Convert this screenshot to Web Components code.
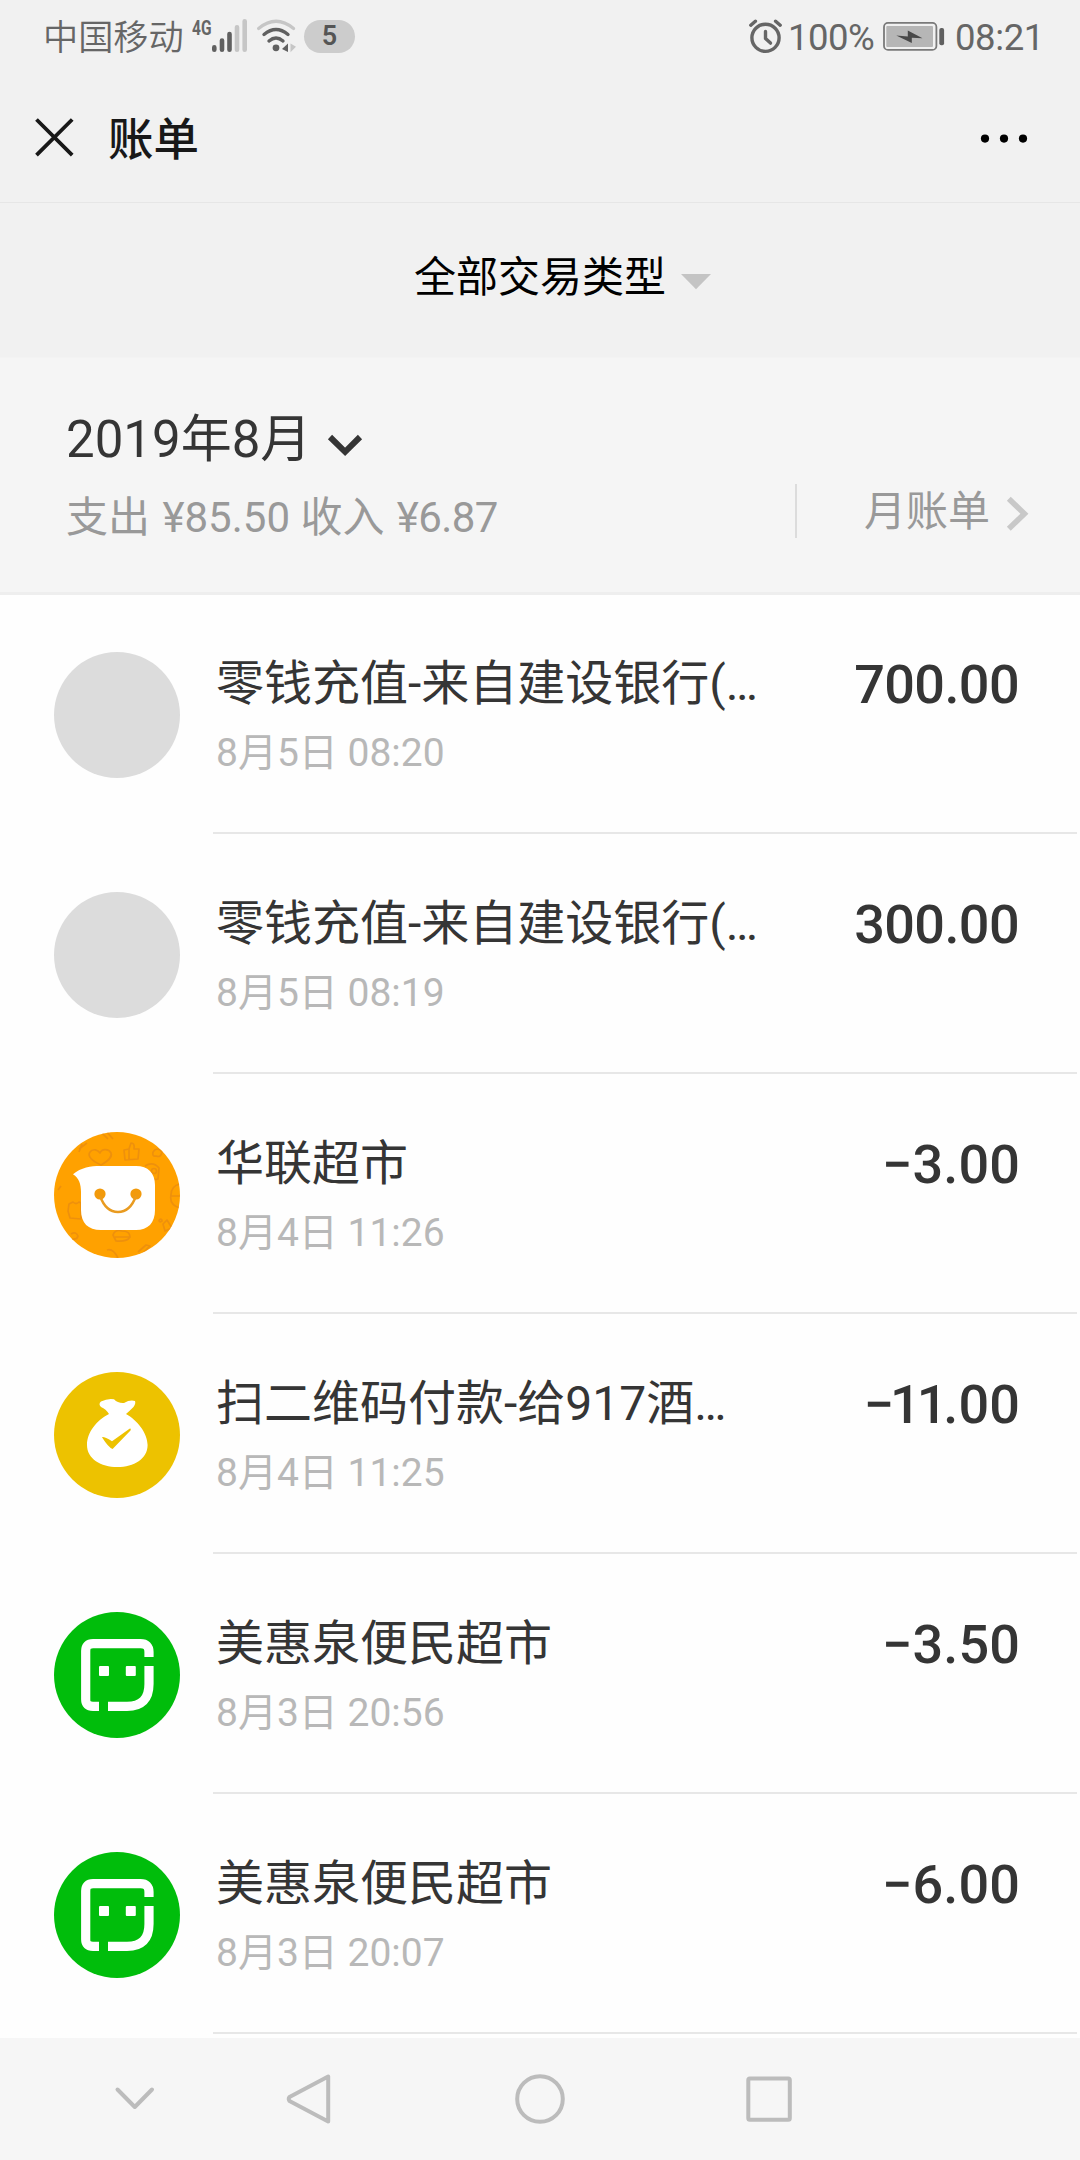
<!DOCTYPE html>
<html lang="zh-CN">
<head>
<meta charset="utf-8">
<title>账单</title>
<style>
html,body{margin:0;padding:0;background:#fefefe}
body{width:1080px;height:2160px;overflow:hidden;font-family:Roboto,"Noto Sans CJK SC",sans-serif}
</style>
</head>
<body>
<bill-app></bill-app>
<script>
const define = (name, html) => customElements.define(name, class extends HTMLElement {
  constructor() {
    super();
    this.attachShadow({ mode: 'open' }).innerHTML =
      '<style>*{box-sizing:border-box}svg{display:block;flex:none}span{white-space:nowrap}</style>' + html;
  }
});

define('status-bar', `
<style>
:host{display:flex;height:75px;color:#666;align-items:flex-start}
.carrier{font-size:35.2px;line-height:40px;margin:18px 0 0 43px;width:147px;font-weight:350}
.net{font-size:21px;line-height:20px;font-weight:700;width:20px;margin:18px 0 0 2px;transform:scaleX(.74);transform-origin:0 0}
.badge{width:51px;height:33px;border-radius:17px;background:#ccc;margin:20px 0 0 7px;text-align:center;font-size:27px;line-height:33px;font-weight:600;color:#555}
.pct,.time{font-size:36.5px;line-height:40px;margin-top:18px}
.pct{margin-left:6px;width:95px;letter-spacing:-.5px}
.time{margin-left:10px;letter-spacing:-.4px}
.gap{flex:none;width:393px}
</style>
<span class="carrier">中国移动</span><span class="net">4G</span>
<svg width="85" height="60" viewBox="210 0 85 60" fill="none" stroke-linecap="round">
  <g stroke="#606060" stroke-width="4.6"><path d="M212.3 47.4v2.4M220 40.6v9.2M227.5 34v15.8"/></g>
  <g stroke="#c6c6c6" stroke-width="4.6"><path d="M235 27.2v22.6M242.7 21.2v28.6"/></g>
  <path d="M256.6 28.5Q274 14 291.6 28.5" stroke="#c6c6c6" stroke-width="3.2"/>
  <path d="M262 34.5Q274 24.5 286 34.5M267 41Q274 35 281 41" stroke="#606060" stroke-width="3.4"/>
  <circle cx="274" cy="47.8" r="3.4" fill="#606060"/>
  <path d="M280 49l6-5.5V52z" fill="#606060"/><path d="M288.5 43.5l5.5 3.2-5.5 5.5z" fill="#c6c6c6"/>
</svg>
<span class="badge">5</span><span class="gap"></span>
<svg width="34" height="60" viewBox="748 0 34 60" fill="none" stroke="#666" stroke-width="3.4" stroke-linecap="round">
  <circle cx="765.5" cy="37.8" r="13.6"/><path d="M750.8 25.2l4.6-4M775.6 21.2l4.6 4"/><path d="M765.5 31.5v7l5 4.6" stroke-linejoin="round"/>
</svg>
<span class="pct">100%</span>
<svg width="62" height="60" viewBox="884 0 62 60">
  <rect x="885" y="22.9" width="52.4" height="27" rx="4" fill="none" stroke="#7a7a7a" stroke-width="1.8"/>
  <rect x="887.3" y="26" width="46.7" height="21" rx="1" fill="#b6b6b6"/>
  <path d="M897.3 35.4L908.8 36.5V30.4L923.5 38.3L912.8 37.8V43Z" fill="#484848"/>
  <rect x="940.3" y="28" width="4.8" height="17.3" rx="2" fill="#606060"/>
</svg>
<span class="time">08:21</span>`);

define('nav-header', `
<style>
:host{display:flex;height:129px;border-bottom:1px solid #e6e6e6;padding:0 52px 0 34px}
span{font-size:45.5px;line-height:60px;font-weight:500;color:#181818;margin:36px 0 0 33px;flex:1}
svg{margin-top:42px}
</style>
<svg width="41" height="41" viewBox="34 117 41 41" stroke="#181818" stroke-width="3.8"><path d="M36.5 119.5L72.2 155.2M72.2 119.5L36.5 155.2"/></svg>
<span><slot></slot></span>
<svg width="50" height="41" viewBox="978 117 50 41"><circle cx="985" cy="138.6" r="4.1"/><circle cx="1004" cy="138.6" r="4.1"/><circle cx="1023" cy="138.6" r="4.1"/></svg>`);

define('type-filter', `
<style>
:host{display:flex;height:155px;background:#f1f1f1;padding:45px 0 0 414px;border-bottom:1px solid #f3f3f3}
span{font-size:42px;line-height:60px;color:#000}
svg{margin:26px 0 0 14px}
</style>
<span><slot></slot></span>
<svg width="32" height="16" viewBox="0 0 32 16"><path d="M1 0H31L16 15.3Z" fill="#c4c4c4"/></svg>`);

define('month-summary', `
<style>
:host{display:flex;height:237px;background:#f5f5f5;border-bottom:3px solid #eee;padding-left:66px}
.left{width:729px;flex:none;display:flex;flex-direction:column}
.month{display:flex;margin-top:52px;height:60px}
.month span{font-size:51px;line-height:60px;color:#353535}
.month svg{margin:23px 0 0 15px}
.stat{font-size:42px;line-height:50px;color:#999;margin-top:23px}
.stat b{font-weight:400;margin-left:2px}
.stat b+b{letter-spacing:-.6px}
.link{display:flex;height:54px;margin-top:126px;border-left:2px solid #dcdcdc;padding-left:67px;color:#999;font-size:42px;line-height:50px}
.link span{margin-top:3px}
.link svg{margin:12px 0 0 16px}
</style>
<div class="left">
  <div class="month"><span>2019年8月</span>
  <svg width="38" height="24" viewBox="326 433 38 24" fill="none" stroke="#353535" stroke-width="6"><path d="M330 437L345.1 451.8L360 437"/></svg></div>
  <span class="stat">支出 <b>¥85.50</b> 收入 <b>¥6.87</b></span>
</div>
<div class="link"><span>月账单</span>
<svg width="24" height="36" viewBox="1006 496 24 36" fill="none" stroke="#c8c8c8" stroke-width="5.6"><path d="M1008.8 498.8L1024.4 513.8L1008.8 528.8"/></svg></div>`);

const ICONS = {
  gray: '<circle cx="63" cy="63" r="63" fill="#dcdcdc"/>',
  smile: `<defs><clipPath id="c"><circle cx="63" cy="63" r="63"/></clipPath></defs>
    <circle cx="63" cy="63" r="63" fill="#ffa200"/>
    <g clip-path="url(#c)" fill="none" stroke="#ea8d10" stroke-width="1.7" stroke-linejoin="round" opacity=".8">
      <path d="M47 33C38 29 33 24 36 20C39 16 44 18 46 21C48 16 55 17 57 21C59 26 52 30 47 33Z"/>
      <path d="M70 18l5-1 2-6q4 0 3 6h5l-1 10-13 1zM75 17v11"/>
      <path d="M48 1l6 6M52 -1l7 8 M99 20q4-6 9 0q-1 6-6 4q-4 1-3-4M91 34q8-5 14 2l-1 11q-7 2-10-4"/>
      <circle cx="100" cy="39" r="2.5"/><path d="M126 52q-9 2-9 11q-2 10 9 13M117 64h9"/>
      <path d="M15 72l4-2q3 3 6 0l2 1v16l-11-1-2-7zM105 88q3-2 3 1q-3 2-3-1M109 92l4-4 5 8-7 3zM17 102q5-3 7 2q-1 4-6 3M59 103q2-6 9-4q8 0 8 6q-3 5-14 4zM61 105h14M53 118q6-2 11 8M84 120l8-7 4 1-8 8M33 11l-8 6M28 12l-3 8M4 58l3-4"/>
    </g>
    <path d="M19 42.2C27 35.5 37 34 46 34H82C94 34 101 41 101 53V78C101 91 94 98 82 98H47C34 98 27 91 27 78V60C27 52 25 46 19 42.2Z" fill="#fff"/>
    <circle cx="46" cy="62" r="5.6" fill="#f29a0b"/><circle cx="82" cy="62" r="5.6" fill="#f29a0b"/>
    <path d="M46 64C50 75 56 80 64 80S78 75 82 64" fill="none" stroke="#e99b20" stroke-width="2.4"/>`,
  bag: `<circle cx="63" cy="63" r="63" fill="#edc200"/>
    <path d="M55 42Q52 37 47 35Q44 32 47 29.5Q54 26 60 27.3Q64 31.5 70 31Q76 27.5 81 29Q82 31.5 79.5 35Q76 38.5 72 42C83 48 93.6 61 93.6 73C93.6 87 80 95 63.4 95S33 87 33 73C33 60 43 48 55 42Z" fill="#fff"/>
    <path d="M48 65.2Q50 64.4 58 69.3L75.5 56.7Q77.5 56 76.5 58.5L58.6 77Q54.5 75.5 48 65.2Z" fill="#edc200"/>`,
  frame: `<circle cx="63" cy="63" r="63" fill="#00bd0b"/>
    <path d="M95 45V40Q95 31.7 86.5 31.7H39Q31.7 31.7 31.7 39V87.5Q31.7 94.4 39 94.4H45M95 54V72Q95 94.4 73 94.4H54" fill="none" stroke="#fff" stroke-width="9.2"/>
    <rect x="45" y="54" width="10" height="10" rx="1" fill="#fff"/><rect x="71.8" y="54" width="10" height="10" rx="1" fill="#fff"/>`
};

customElements.define('bill-row', class extends HTMLElement {
  constructor() {
    super();
    this.attachShadow({ mode: 'open' }).innerHTML = `
<style>
:host{display:flex;flex:none;height:240px;padding-left:54px}
svg{display:block;flex:none;margin-top:58px;width:126px;height:126px;overflow:visible}
.body{flex:1;margin:0 3px 0 33px;border-bottom:2px solid #e7e7e7;display:flex;justify-content:space-between;padding:0 57px 0 3px;box-sizing:border-box}
.text{display:flex;flex-direction:column;white-space:nowrap}
.title{font-size:48px;line-height:60px;color:#353535;margin-top:60px}
.date{font-size:39px;line-height:46px;color:#b8b8b8;margin-top:16px}
.amount{font-size:54px;line-height:60px;font-weight:500;color:#353535;margin-top:61px;letter-spacing:-.6px;white-space:nowrap}
:host(:not([out])) .amount{margin-right:1px}
:host([out]) .amount{letter-spacing:.1px}
</style>
<svg viewBox="0 0 126 126">${ICONS[this.getAttribute('icon')]}</svg>
<div class="body"><div class="text"><span class="title"><slot name="title"></slot></span><span class="date"><slot name="date"></slot></span></div><span class="amount"><slot></slot></span></div>`;
  }
});

define('system-nav', `
<style>
:host{display:flex;height:122px;background:#f6f6f6;align-items:center;padding-left:113px}
svg{fill:none;stroke:#bcbcbc;stroke-width:4;stroke-linejoin:round;stroke-linecap:round}
.b{margin-left:129px}.c{margin-left:179px}.d{margin-left:177px}
</style>
<svg width="44" height="54" viewBox="113 2072 44 54"><path d="M117.5 2089.5L134.8 2107L152 2089.5"/></svg>
<svg class="b" width="48" height="54" viewBox="286 2072 48 54"><path d="M328.2 2076.5V2121.5L289.5 2101Q288 2099 289.5 2097Z"/></svg>
<svg class="c" width="54" height="54" viewBox="513 2072 54 54"><circle cx="540" cy="2099" r="22.8"/></svg>
<svg class="d" width="50" height="54" viewBox="744 2072 50 54"><rect x="748.3" y="2078.5" width="41.5" height="41.2" rx="1.5"/></svg>`);

define('bill-app', `
<style>
:host{display:flex;flex-direction:column;width:1080px;height:2160px;background:#fefefe}
.top{background:#f1f1f1;height:203px;display:flex;flex-direction:column;justify-content:space-between}
.top nav-header{height:128px}
.list{display:flex;flex-direction:column;height:1444px;margin-top:-1px;overflow:hidden;flex:none}
.ones{letter-spacing:-4.1px}
</style>
<div class="top"><status-bar></status-bar><nav-header>账单</nav-header></div>
<type-filter>全部交易类型</type-filter>
<month-summary></month-summary>
<div class="list">
<bill-row icon="gray"><span slot="title">零钱充值-来自建设银行(…</span><span slot="date">8月5日 08:20</span>700.00</bill-row>
<bill-row icon="gray"><span slot="title">零钱充值-来自建设银行(…</span><span slot="date">8月5日 08:19</span>300.00</bill-row>
<bill-row out icon="smile"><span slot="title">华联超市</span><span slot="date">8月4日 11:26</span>−3.00</bill-row>
<bill-row out icon="bag"><span slot="title">扫二维码付款-给917酒…</span><span slot="date">8月4日 11:25</span><span class="ones">−11</span>.00</bill-row>
<bill-row out icon="frame"><span slot="title">美惠泉便民超市</span><span slot="date">8月3日 20:56</span>−3.50</bill-row>
<bill-row out icon="frame"><span slot="title">美惠泉便民超市</span><span slot="date">8月3日 20:07</span>−6.00</bill-row>
</div>
<system-nav></system-nav>`);
</script>
</body>
</html>
